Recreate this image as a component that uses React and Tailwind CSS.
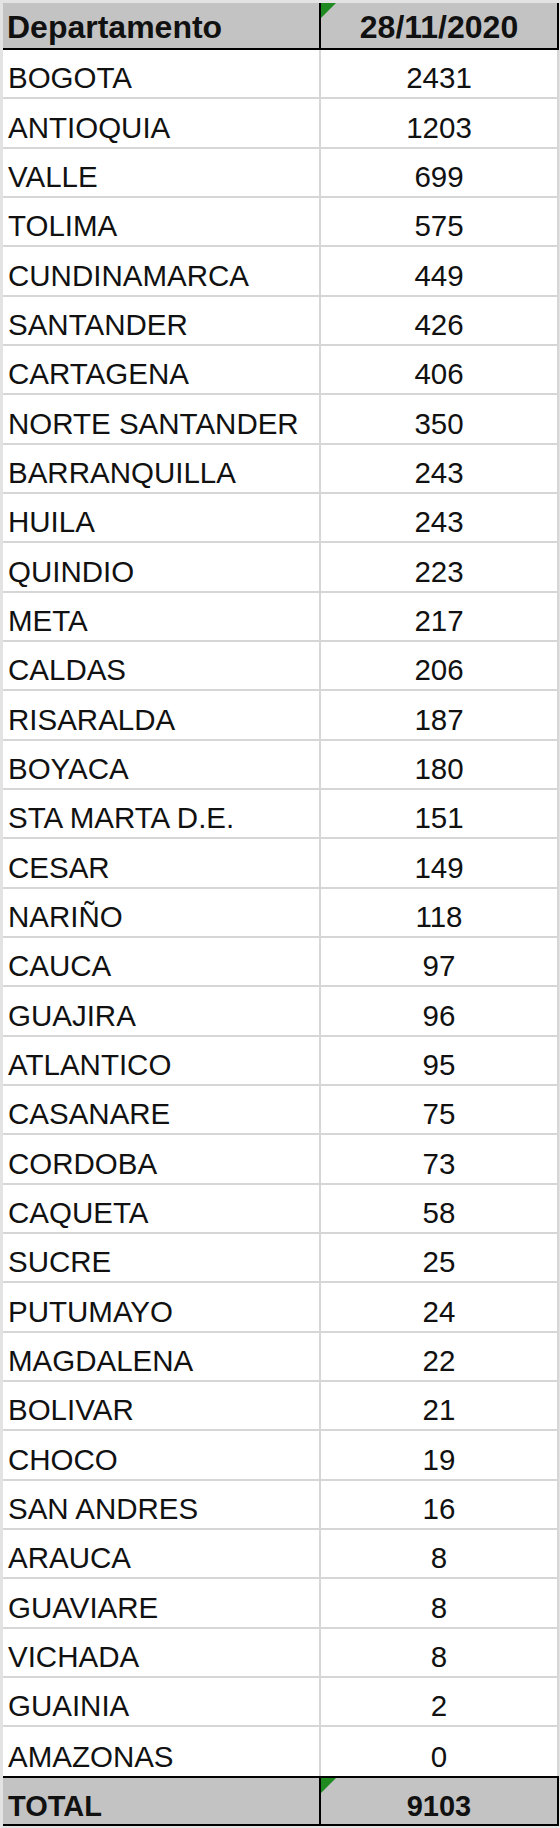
import React from 'react';

const rows = [
  ['BOGOTA', 2431],
  ['ANTIOQUIA', 1203],
  ['VALLE', 699],
  ['TOLIMA', 575],
  ['CUNDINAMARCA', 449],
  ['SANTANDER', 426],
  ['CARTAGENA', 406],
  ['NORTE SANTANDER', 350],
  ['BARRANQUILLA', 243],
  ['HUILA', 243],
  ['QUINDIO', 223],
  ['META', 217],
  ['CALDAS', 206],
  ['RISARALDA', 187],
  ['BOYACA', 180],
  ['STA MARTA D.E.', 151],
  ['CESAR', 149],
  ['NARIÑO', 118],
  ['CAUCA', 97],
  ['GUAJIRA', 96],
  ['ATLANTICO', 95],
  ['CASANARE', 75],
  ['CORDOBA', 73],
  ['CAQUETA', 58],
  ['SUCRE', 25],
  ['PUTUMAYO', 24],
  ['MAGDALENA', 22],
  ['BOLIVAR', 21],
  ['CHOCO', 19],
  ['SAN ANDRES', 16],
  ['ARAUCA', 8],
  ['GUAVIARE', 8],
  ['VICHADA', 8],
  ['GUAINIA', 2],
  ['AMAZONAS', 0]
];

// green "number stored as text" marker in the cell corner
function Marker() {
  return (
    <svg className="absolute left-0 top-0" width="15" height="15" viewBox="0 0 15 15">
      <polygon points="0,0 15,0 0,15" fill="#1f8a1f" />
    </svg>
  );
}

export default function App() {
  return (
    <div className="w-[560px] h-[1828px] bg-[#e3e3e3] pt-[3px] pl-[3px] font-['Liberation_Sans',Arial,sans-serif] text-[#111111]">
      <div className="w-[556px] bg-white">

        {/* Header */}
        <div className="flex h-[47px] bg-[#c3c3c3] border-b-2 border-black">
          <div className="w-[316px] flex items-center pt-[3px] pl-[4px] text-[32px] leading-none font-bold">
            Departamento
          </div>
          <div className="relative w-[240px] flex items-center justify-center pt-[3px] border-l-2 border-r-2 border-black text-[32px] leading-none font-bold">
            <Marker />
            28/11/2020
          </div>
        </div>

        {/* Body */}
        {rows.map(([name, value], i) => (
          <div
            key={name}
            className={`flex h-[49.34px] ${i === rows.length - 1 ? '' : 'border-b-2 border-[#d6d6d6]'}`}
          >
            <div className="w-[316px] flex items-center pt-[9px] pl-[5px] text-[29.5px] leading-none">
              {name}
            </div>
            <div className="w-[240px] flex items-center justify-center pt-[9px] border-l-2 border-r-2 border-[#d6d6d6] text-[29.5px] leading-none">
              {value}
            </div>
          </div>
        ))}

        {/* Total */}
        <div className="flex h-[50px] bg-[#c3c3c3] border-t-2 border-b-2 border-black">
          <div className="w-[316px] flex items-center pt-[10px] pl-[5px] text-[29px] leading-none font-bold">
            TOTAL
          </div>
          <div className="relative w-[240px] flex items-center justify-center pt-[10px] border-l-2 border-r-2 border-black text-[29px] leading-none font-bold">
            <Marker />
            9103
          </div>
        </div>

      </div>
    </div>
  );
}
